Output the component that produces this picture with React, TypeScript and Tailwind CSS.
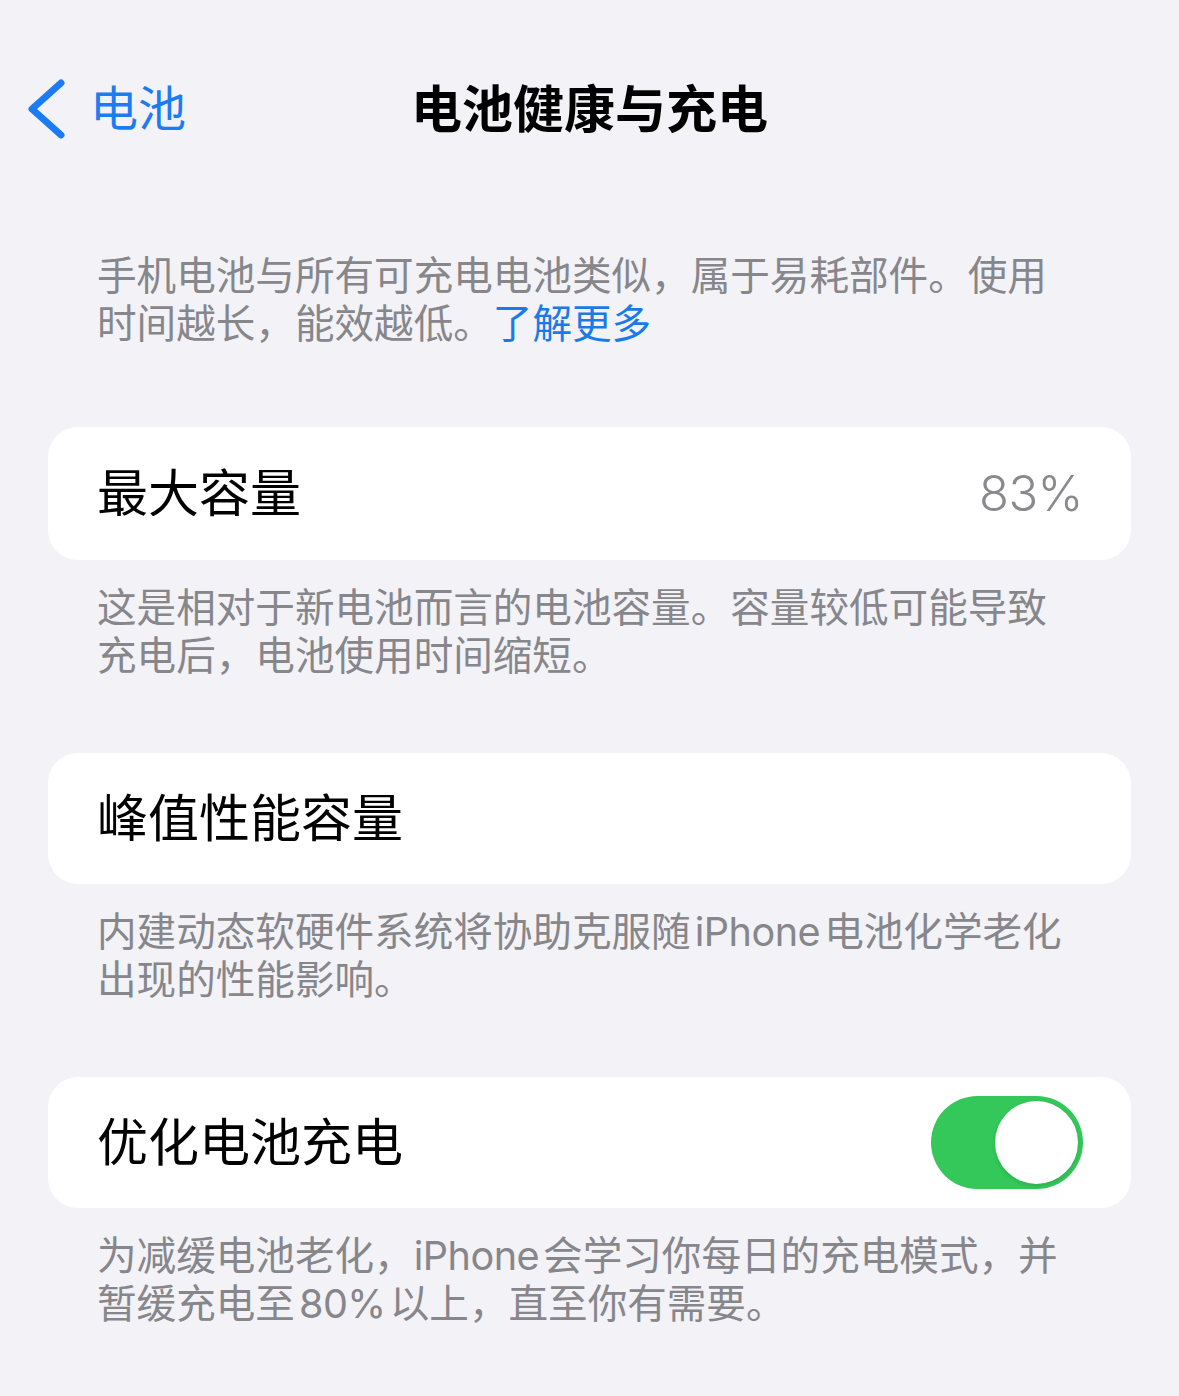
import React from "react";

const FONT = 'Inter, "Noto Sans CJK SC", "Noto Sans", sans-serif';

function Chevron() {
  return (
    <svg width="42" height="60" viewBox="0 0 42 60" className="block">
      <polyline
        points="35,4 6,30 35,56"
        fill="none"
        stroke="#1c7cf4"
        strokeWidth="7"
        strokeLinecap="round"
        strokeLinejoin="round"
      />
    </svg>
  );
}

function Toggle() {
  return (
    <div className="flex h-[93px] w-[152px] items-center justify-end rounded-full bg-[#34c759] p-[5px]">
      <div className="h-[83px] w-[83px] rounded-full bg-white shadow-[0_2px_4px_rgba(0,0,0,0.12)]" />
    </div>
  );
}

// Latin run inside Chinese text, with narrow gaps on either side
function Latin({ children }: { children: React.ReactNode }) {
  return <span className="mx-[4px] tracking-[-0.5px]">{children}</span>;
}

function Note({ lines }: { lines: React.ReactNode[] }) {
  return (
    <div className="px-[97px] text-[39.6px] leading-[48px] text-[#86868b]">
      {lines.map((l, i) => (
        <div key={i} className="whitespace-nowrap">
          {l}
        </div>
      ))}
    </div>
  );
}

function Card({
  label,
  right,
  height,
}: {
  label: string;
  right?: React.ReactNode;
  height: string;
}) {
  return (
    <div
      className={`mx-[48px] flex items-center justify-between rounded-[30px] bg-white pl-[49px] pr-[48px] ${height}`}
    >
      <span className="text-[51px] leading-none text-black">{label}</span>
      {right}
    </div>
  );
}

export default function App() {
  return (
    <div
      className="min-h-[1396px] w-full bg-[#f2f2f7] pt-[62px]"
      style={{ fontFamily: FONT }}
    >
      {/* navigation bar */}
      <div className="grid h-[94px] grid-cols-[1fr_auto_1fr] items-center">
        <div className="flex items-center pl-[26px]">
          <Chevron />
          <span className="ml-[22px] text-[48px] leading-none text-[#1c7cf4]">
            电池
          </span>
        </div>
        <div className="text-[51px] font-bold leading-none text-black">
          电池健康与充电
        </div>
        <div />
      </div>

      <div className="mt-[96px]">
        <Note
          lines={[
            "手机电池与所有可充电电池类似，属于易耗部件。使用",
            <>
              时间越长，能效越低。
              <span className="text-[#1a7ae8]">了解更多</span>
            </>,
          ]}
        />
      </div>

      <div className="mt-[79px]">
        <Card
          label="最大容量"
          height="h-[133px]"
          right={
            <span className="text-[49px] font-light leading-none tracking-[-0.5px] text-[#8a8a8e]">
              83%
            </span>
          }
        />
      </div>
      <div className="mt-[24px]">
        <Note
          lines={[
            "这是相对于新电池而言的电池容量。容量较低可能导致",
            "充电后，电池使用时间缩短。",
          ]}
        />
      </div>

      <div className="mt-[73px]">
        <Card label="峰值性能容量" height="h-[131px]" />
      </div>
      <div className="mt-[24px]">
        <Note
          lines={[
            <>
              内建动态软硬件系统将协助克服随<Latin>iPhone</Latin>电池化学老化
            </>,
            "出现的性能影响。",
          ]}
        />
      </div>

      <div className="mt-[73px]">
        <Card label="优化电池充电" height="h-[131px]" right={<Toggle />} />
      </div>
      <div className="mt-[24px]">
        <Note
          lines={[
            <>
              为减缓电池老化，<span className="mr-[4px] tracking-[-0.5px]">iPhone</span>会学习你每日的充电模式，并
            </>,
            <>
              暂缓充电至<Latin>80%</Latin>以上，直至你有需要。
            </>,
          ]}
        />
      </div>
    </div>
  );
}
